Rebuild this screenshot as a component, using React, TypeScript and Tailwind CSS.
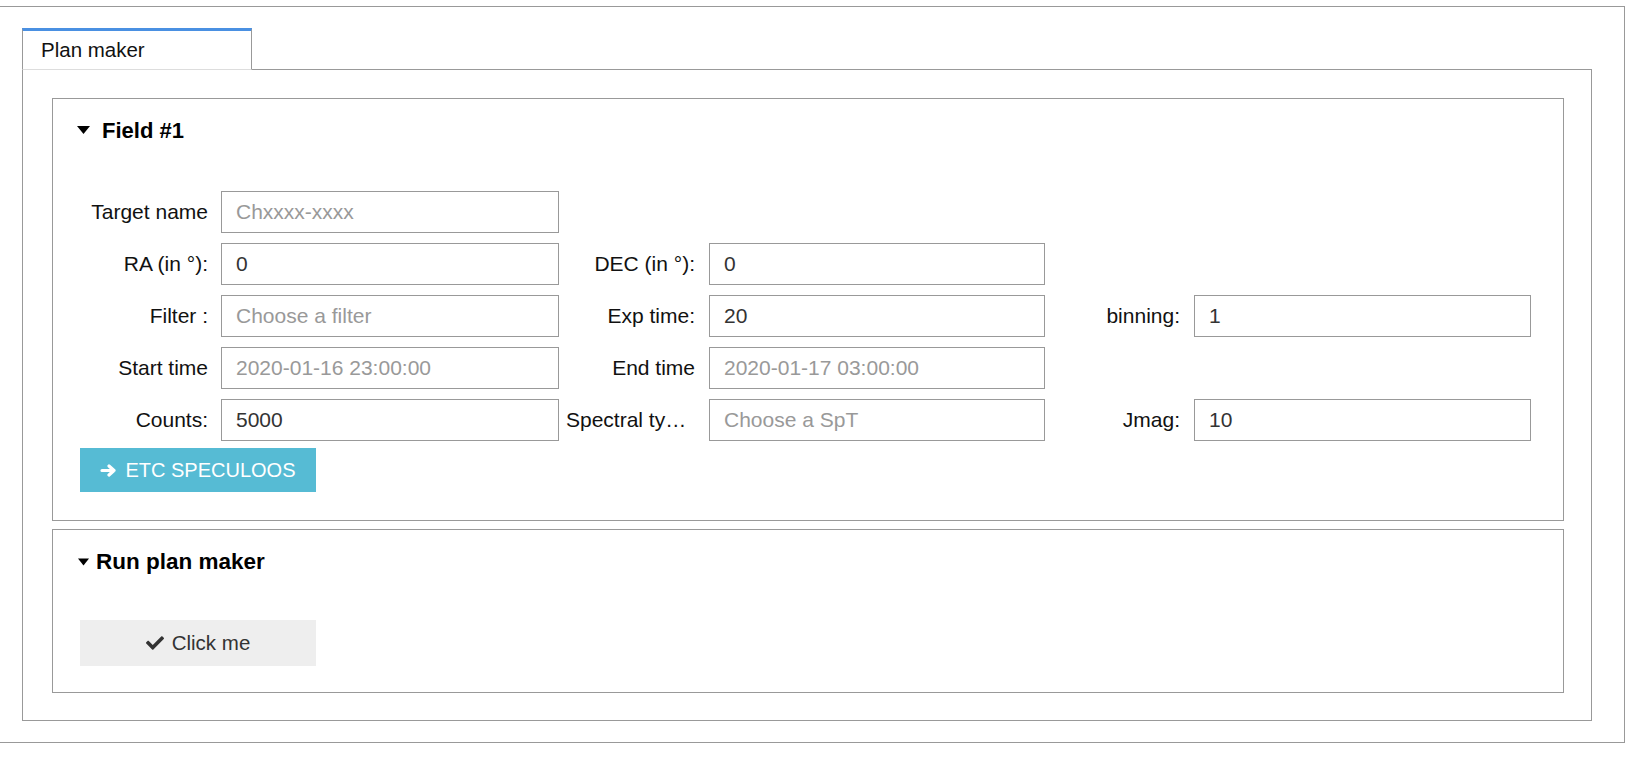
import { FaCheck } from "react-icons/fa";

type Field = { label: string; value?: string; placeholder?: string };

const rows: Field[][] = [
  [{ label: "Target name", placeholder: "Chxxxx-xxxx" }],
  [
    { label: "RA (in °):", value: "0" },
    { label: "DEC (in °):", value: "0" },
  ],
  [
    { label: "Filter :", placeholder: "Choose a filter" },
    { label: "Exp time:", value: "20" },
    { label: "binning:", value: "1" },
  ],
  [
    { label: "Start time", placeholder: "2020-01-16 23:00:00" },
    { label: "End time", placeholder: "2020-01-17 03:00:00" },
  ],
  [
    { label: "Counts:", value: "5000" },
    { label: "Spectral type (SpT):", placeholder: "Choose a SpT" },
    { label: "Jmag:", value: "10" },
  ],
];

// label width, gap before input, input width, gap before cell
const cols = [
  { label: "w-[131px]", input: "w-[338px] ml-[13px]", cell: "" },
  { label: "w-[129px]", input: "w-[336px] ml-[14px]", cell: "ml-[7px]" },
  { label: "w-[128px]", input: "w-[337px] ml-[14px]", cell: "ml-[7px]" },
];

const Caret = ({ w = 13 }: { w?: number }) => (
  <svg width={w} height={8} viewBox="0 0 13 8" className="shrink-0">
    <polygon points="0,0 13,0 6.5,8" fill="#000" />
  </svg>
);

const ArrowIcon = () => (
  <svg width={17} height={13} viewBox="0 0 17 13" className="shrink-0">
    <path d="M2 6.5H14M9 2L14 6.5L9 11" stroke="#fff" strokeWidth={3.2} fill="none" strokeLinecap="round" strokeLinejoin="round" />
  </svg>
);

const FieldRow = ({ fields }: { fields: Field[] }) => (
  <div className="flex items-center h-[42px]">
    {fields.map((f, i) => (
      <div key={f.label} className={`flex items-center ${cols[i].cell}`}>
        <label className={`${cols[i].label} text-right truncate text-[21px] text-[#111]`}>{f.label}</label>
        <input
          className={`${cols[i].input} h-[42px] border border-[#999] bg-white px-[14px] text-[21px] text-[#333] placeholder:text-[#999] outline-none`}
          defaultValue={f.value}
          placeholder={f.placeholder}
        />
      </div>
    ))}
  </div>
);

export default function App() {
  return (
    <div className="min-h-[764px] bg-white pt-[6px] text-[20px] text-[#111] font-['Liberation_Sans',Arial,sans-serif] overflow-hidden">
      <div className="ml-[-2px] w-[1627px] border border-[#999] pt-[21px] pl-[23px] pr-[32px] pb-[21px]">
        {/* tab strip */}
        <div className="flex">
          <div className="w-[230px] h-[42px] border-t-[3px] border-t-[#4a90e2] border-x border-x-[#999] border-b border-b-[#dddddd] pl-[18px] flex items-center text-[20.5px]">
            Plan maker
          </div>
          <div className="flex-1 h-[42px] border-b border-[#999]" />
        </div>

        {/* tab panel */}
        <div className="border-x border-b border-[#999] pt-[28px] pl-[29px] pr-[27px] pb-[27px]">
          <div className="border border-[#999] pt-[16px] pl-[24px] pb-[28px]">
            <div className="h-[30px] flex items-center gap-[12px] text-[22px] font-bold text-black">
              <Caret />
              <span>Field #1</span>
            </div>
            <div className="mt-[46px] flex flex-col gap-[10px]">
              {rows.map((r, i) => (
                <FieldRow key={i} fields={r} />
              ))}
            </div>
            <button className="mt-[7px] ml-[3px] w-[236px] h-[44px] bg-[#56bbd4] text-white flex items-center justify-center gap-[8px]">
              <ArrowIcon />
              <span>ETC SPECULOOS</span>
            </button>
          </div>

          <div className="mt-[8px] border border-[#999] pt-[17px] pl-[24px] pb-[26px]">
            <div className="h-[30px] flex items-center gap-[7px] text-[22.5px] font-bold text-black pl-[1px]">
              <Caret w={11} />
              <span>Run plan maker</span>
            </div>
            <button className="mt-[43px] ml-[3px] w-[236px] h-[46px] bg-[#eeeeee] text-[#333] flex items-center justify-center gap-[8px] text-[20.5px]">
              <FaCheck size={18} />
              <span>Click me</span>
            </button>
          </div>
        </div>
      </div>
    </div>
  );
}
